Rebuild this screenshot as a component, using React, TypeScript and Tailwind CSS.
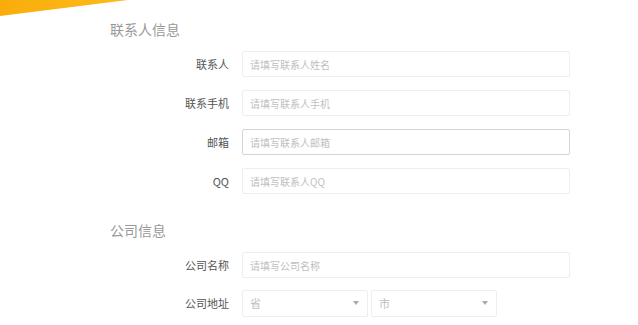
const contact = [
  { label: "联系人", placeholder: "请填写联系人姓名", focus: false },
  { label: "联系手机", placeholder: "请填写联系人手机", focus: false },
  { label: "邮箱", placeholder: "请填写联系人邮箱", focus: true },
  { label: "QQ", placeholder: "请填写联系人QQ", focus: false },
];

function Field({ label, children }: { label: string; children: React.ReactNode }) {
  return (
    <div className="flex items-center h-[26px]">
      <div className="w-[120px] pr-[1px] text-right text-[11px] text-[#555]">{label}</div>
      <div className="ml-[12px] flex">{children}</div>
    </div>
  );
}

function Input({ placeholder, focus }: { placeholder: string; focus?: boolean }) {
  return (
    <div
      className={`w-[328px] h-[26px] border rounded-[2px] bg-white flex items-center px-[7px] text-[10px] text-[#c0c0c0] ${
        focus ? "border-[#d4d4d4]" : "border-[#eeeeee]"
      }`}
    >
      {placeholder}
    </div>
  );
}

function Select({ text, width }: { text: string; width: string }) {
  return (
    <div
      className={`${width} h-[27px] border border-[#eeeeee] rounded-[2px] bg-white flex items-center justify-between pl-[7px] pr-[8px] text-[11px] text-[#c0c0c0]`}
    >
      <span>{text}</span>
      <svg width="6" height="4" viewBox="0 0 6 4">
        <path d="M0 0 L6 0 L3 4 Z" fill="#aaa" />
      </svg>
    </div>
  );
}

export default function App() {
  return (
    <div
      className="relative w-[638px] h-[325px] bg-white overflow-hidden"
      style={{ fontFamily: '"Noto Sans CJK SC", "Liberation Sans", sans-serif' }}
    >
      <svg className="absolute left-0 top-0" width="140" height="20" viewBox="0 0 140 20">
        <defs>
          <linearGradient id="y" x1="0" y1="0" x2="1" y2="0">
            <stop offset="0" stopColor="#f9ad0a" />
            <stop offset="1" stopColor="#fdbb1c" />
          </linearGradient>
        </defs>
        <path d="M0 0 L128 0 L0 16 Z" fill="url(#y)" />
      </svg>

      <div className="pl-[110px] pt-[19px]">
        <div className="text-[14px] leading-[20px] text-[#999]">联系人信息</div>
        <div className="mt-[12px] flex flex-col gap-[13px]">
          {contact.map((c) => (
            <Field key={c.label} label={c.label}>
              <Input placeholder={c.placeholder} focus={c.focus} />
            </Field>
          ))}
        </div>

        <div className="mt-[26px] text-[14px] leading-[20px] text-[#999]">公司信息</div>
        <div className="mt-[12px] flex flex-col gap-[12px]">
          <Field label="公司名称">
            <Input placeholder="请填写公司名称" />
          </Field>
          <Field label="公司地址">
            <div className="flex gap-[3px]">
              <Select text="省" width="w-[126px]" />
              <Select text="市" width="w-[126px]" />
            </div>
          </Field>
        </div>
      </div>
    </div>
  );
}
